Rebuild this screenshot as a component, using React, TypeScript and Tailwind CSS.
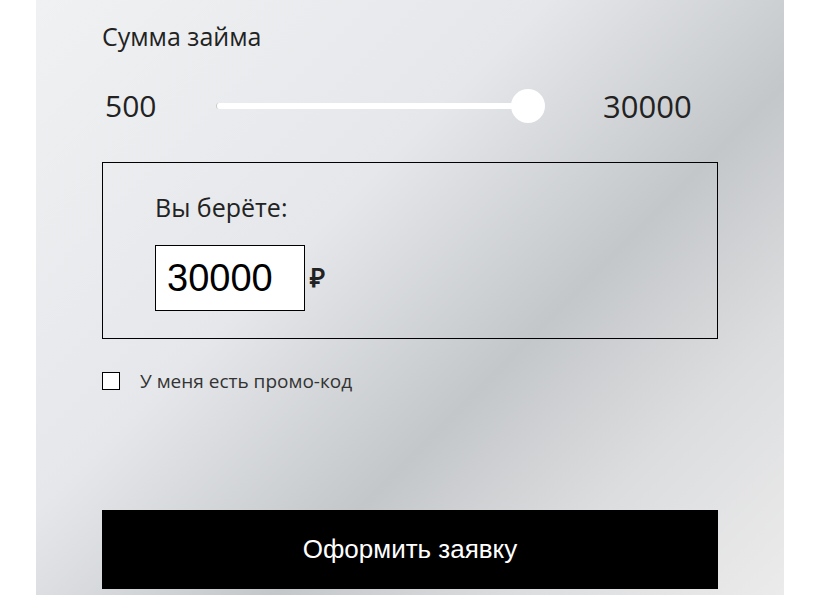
import React from "react";

export default function App() {
  return (
    <div className="w-[817px] h-[595px] bg-white overflow-hidden">
      <div
        className="ml-[36px] w-[748px] h-[595px] px-[66px] pt-[20px] bg-[linear-gradient(135deg,#f0f1f3_0%,#e5e7ea_38%,#c4c7ca_62%,#dcdddf_80%,#ebebeb_100%)]"
        style={{ fontFamily: '"Open Sans", sans-serif' }}
      >
        <div className="text-[25px] leading-[32px] text-[#222]">Сумма займа</div>
        <div className="mt-[34px] flex items-center h-[40px]">
          <div className="w-[114px] pl-[3px] text-[30px] text-[#222] leading-[40px]">500</div>
          <div className="relative w-[330px] h-[40px] flex items-center">
            <div className="w-[314px] h-[6px] bg-white rounded-l-full border-l border-[#c8c8c8]" />
            <div className="absolute left-[295px] top-[3px] w-[34px] h-[34px] rounded-full bg-white" />
          </div>
          <div className="pl-[57px] text-[31px] text-[#222] leading-[40px]">30000</div>
        </div>
        <div className="mt-[36px] h-[177px] border border-black pl-[52px] pt-[26px]">
          <div className="text-[25px] leading-[36px] text-[#222]">Вы берёте:</div>
          <div className="mt-[20px] flex items-center">
            <div
              className="w-[150px] h-[66px] bg-white border border-black pl-[11px] flex items-center text-[38px] text-black"
              style={{ fontFamily: '"Liberation Sans", Arial, sans-serif' }}
            >
              30000
            </div>
            <div
              className="ml-[5px] text-[26px] font-bold text-[#222]"
              style={{ fontFamily: '"Liberation Sans", Arial, sans-serif' }}
            >
              ₽
            </div>
          </div>
        </div>
        <div className="mt-[32px] flex items-center">
          <div className="w-[18px] h-[18px] bg-white border border-black" />
          <div className="ml-[20px] text-[19px] text-[#333] leading-[20px]">У меня есть промо-код</div>
        </div>
        <div
          className="mt-[119px] h-[79px] bg-black text-white flex items-center justify-center text-[26px]"
          style={{ fontFamily: '"Liberation Sans", Arial, sans-serif' }}
        >
          Оформить заявку
        </div>
      </div>
    </div>
  );
}
